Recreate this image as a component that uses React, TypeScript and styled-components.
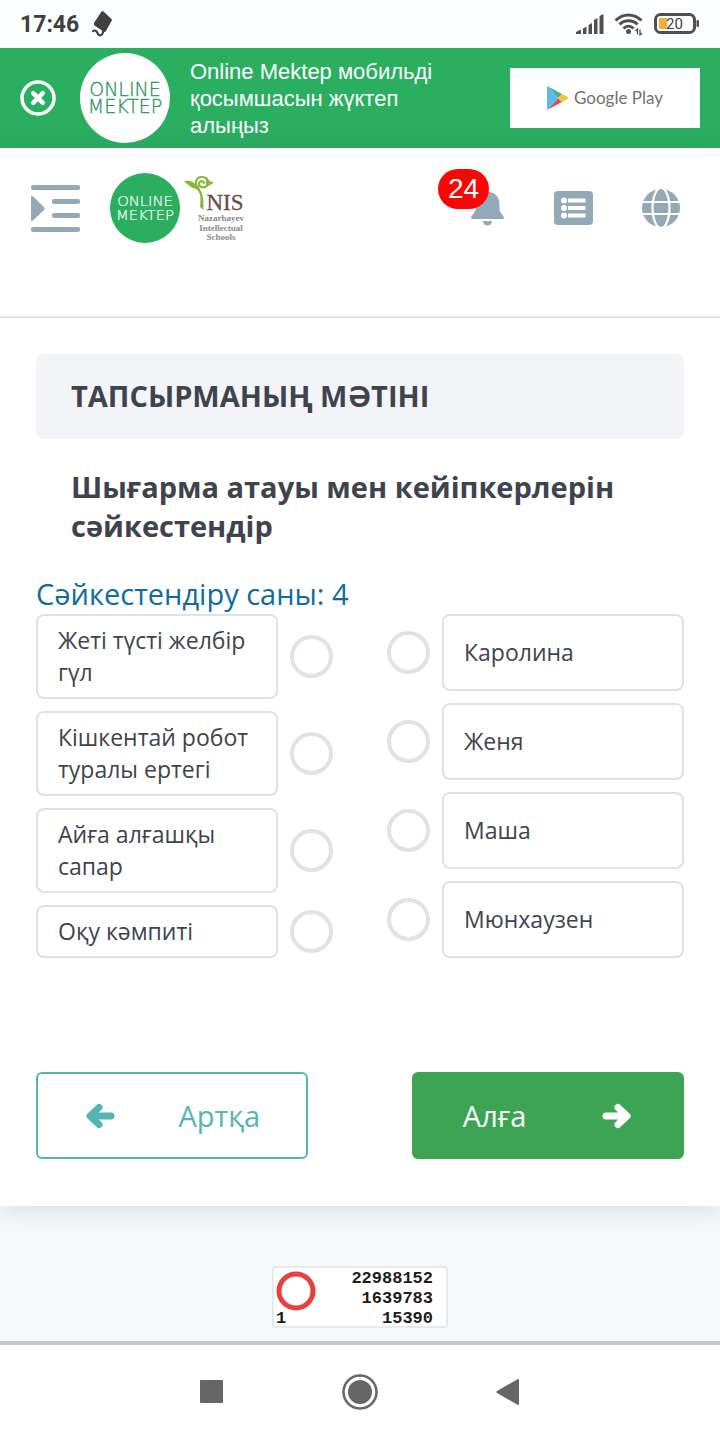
import React from "react";
import styled, { createGlobalStyle } from "styled-components";

const sans = `"Open Sans", "Noto Sans", sans-serif`;
const grotesk = `"Liberation Sans", Arial, sans-serif`;

const GlobalStyle = createGlobalStyle`
  *, *::before, *::after { box-sizing: border-box; }
  body { margin: 0; background: #f5f9fc; color: #3e444e; font-family: ${sans}; }
  h1, h2, p { margin: 0; }
  button { font: inherit; margin: 0; padding: 0; border: 0; background: none; color: inherit; cursor: pointer; }
  svg { display: block; flex: none; overflow: visible; }
`;

const Screen = styled.div`
  display: flex;
  flex-direction: column;
  min-height: 100vh;
`;

const StatusBar = styled.div`
  display: flex;
  align-items: center;
  justify-content: space-between;
  height: 48px;
  padding: 0 20px;
  background: #fdfffe;
  color: #404040;
`;

const StatusGroup = styled.div<{ $gap: number }>`
  display: flex;
  align-items: center;
  gap: ${(p) => p.$gap}px;
`;

const Clock = styled.time`
  padding-top: 2px;
  font: 700 23px/46px Roboto, sans-serif;
`;

const Banner = styled.section`
  display: flex;
  align-items: center;
  height: 100px;
  padding: 0 20px;
  background: #2aae60;
  color: #fff;
`;

const BannerText = styled.p`
  flex: 1;
  padding: 0 60px 0 20px;
  font: 400 22px/27px ${grotesk};
`;

const CloseButton = styled.button`
  margin-right: 24px;
`;

const StoreLink = styled.a`
  display: flex;
  align-items: center;
  justify-content: center;
  gap: 6px;
  width: 190px;
  height: 60px;
  background: #fefefe;
  color: #77706f;
  font: 400 17px/24px Lato, sans-serif;
  text-decoration: none;
`;

const Panel = styled.div`
  background: #fff;
  box-shadow: 0 4px 24px rgba(60, 80, 100, 0.16);
`;

const Header = styled.header`
  display: flex;
  align-items: flex-start;
  height: 170px;
  padding: 24px 36px 0 30px;
  border-bottom: 2px solid #e2e5e8;
  color: #93a9b8;
`;

const HeaderButton = styled.button`
  position: relative;
  display: flex;
  align-items: center;
  height: 72px;
`;

const Brand = styled.a`
  display: flex;
  align-items: center;
  gap: 4px;
  margin-left: 30px;
  text-decoration: none;
`;

const Tools = styled.nav`
  display: flex;
  gap: 46px;
  margin-left: auto;
`;

const Badge = styled.span`
  position: absolute;
  top: -3px;
  left: -32px;
  padding: 0 10px;
  border-radius: 20px;
  background: #fb0505;
  color: #fff;
  font: 400 28px/40px ${grotesk};
`;

const Task = styled.main`
  padding: 36px 36px 47px;
`;

const TaskLabel = styled.h1`
  padding: 0 35px 1px;
  border-radius: 8px;
  background: #f3f4f8;
  font-size: 29px;
  line-height: 84px;
  font-weight: 700;
`;

const Question = styled.h2`
  padding: 28px 35px 29px;
  font-size: 29px;
  line-height: 39px;
  font-weight: 700;
`;

const MatchCount = styled.p`
  color: #0f6ba3;
  font-size: 29px;
  line-height: 40px;
`;

const Matching = styled.div`
  display: grid;
  grid-template-columns: 1fr 1fr;
  gap: 54px;
`;

const Column = styled.div`
  display: flex;
  flex-direction: column;
  gap: 12px;
`;

const Option = styled.div<{ $side: "left" | "right" }>`
  display: flex;
  flex: ${(p) => (p.$side === "right" ? "1" : "none")};
  flex-direction: ${(p) => (p.$side === "right" ? "row-reverse" : "row")};
  align-items: center;
  gap: 12px;
`;

const OptionLabel = styled.label`
  display: flex;
  flex: 1;
  align-items: center;
  align-self: stretch;
  padding: 8px 20px 9px;
  border: 2px solid #dfe1e5;
  border-radius: 8px;
  font-size: 23px;
  line-height: 32px;
`;

const Ring = styled.input`
  flex: none;
  appearance: none;
  width: 43px;
  height: 43px;
  margin: 0;
  border: 4px solid #dfe3e7;
  border-radius: 50%;
  background: #fff;

  &:checked { border-color: #3aa352; }
`;

const Actions = styled.div`
  display: flex;
  justify-content: space-between;
  margin-top: 114px;
`;

const StepButton = styled.button<{ $primary?: boolean }>`
  && {
    display: flex;
    align-items: center;
    justify-content: space-between;
    width: 42%;
    height: 87px;
    padding: 0 ${(p) => (p.$primary ? 50 : 46)}px 0 ${(p) => (p.$primary ? 49 : 47)}px;
    border: 2px solid ${(p) => (p.$primary ? "#3ca452" : "#56b5b2")};
    border-radius: 6px;
    background: ${(p) => (p.$primary ? "#3ca452" : "#fff")};
    color: ${(p) => (p.$primary ? "#fff" : "#56b5b2")};
    font-size: 29px;
    line-height: 40px;
  }
`;

const Footer = styled.footer`
  display: flex;
  flex: 1;
  justify-content: center;
  padding: 60px 0 13px;
`;

const Counter = styled.div`
  display: flex;
  justify-content: space-between;
  width: 176px;
  height: 62px;
  padding: 1px 13px 0 2px;
  border: 2px solid #e6e9eb;
  border-radius: 4px;
  background: #fff;
  color: #1c1c1c;
  font: 700 17px/20px "Liberation Mono", monospace;
`;

const CounterSide = styled.div<{ $end?: boolean }>`
  display: flex;
  flex-direction: column;
  align-items: ${(p) => (p.$end ? "flex-end" : "flex-start")};
`;

const SystemNav = styled.nav`
  display: flex;
  align-items: center;
  justify-content: center;
  height: 99px;
  padding: 0 1px 2px 0;
  border-top: 4px solid #c6c9cb;
  background: #fff;
`;

const NavKey = styled.button`
  display: flex;
  justify-content: center;
  width: 148px;
`;

function MektepLogo({ size, disc, ink }: { size: number; disc: string; ink: string }) {
  return (
    <svg width={size} height={size} viewBox="0 0 90 90" role="img" aria-label="Online Mektep">
      <circle cx="45" cy="45" r="45" fill={disc} />
      <g fill={ink} stroke={ink} strokeWidth="0.3" fontFamily="'DejaVu Sans'" fontWeight="200" fontSize="19" textAnchor="middle">
        <text x="45" y="43">ONLINE</text>
        <text x="45" y="60">MEKTEP</text>
      </g>
    </svg>
  );
}

function NisLogo() {
  return (
    <svg width="64" height="72" viewBox="0 0 64 72" role="img" aria-label="NIS">
      <path d="M0 9C5 8 10 9 13 14C18 18 20 25 19.500 38L16 35C17 27 17 20 12 17C8 16 4 13 0 9Z" fill="#86b83c" />
      <path d="M22 5C25 9 27 10 30 10.500C27 13 24 14 22 14Z" fill="#86b83c" />
      <path d="M14 16C10 11 12 5 18 5C23 5 25 9 24 12C22 17 15 16 15 12C15 9 19 8 20 11" fill="none" stroke="#86b83c" strokeWidth="2.200" strokeLinecap="round" />
      <g fontFamily="'Liberation Serif'" textAnchor="middle">
        <text x="41" y="38" fontSize="23" fill="#6b4e40" stroke="#6b4e40" strokeWidth="0.3">NIS</text>
        <g fontSize="9" fontWeight="700" fill="#8a8885">
          <text x="37" y="49">Nazarbayev</text>
          <text x="37" y="59">Intellectual</text>
          <text x="37" y="68">Schools</text>
        </g>
      </g>
    </svg>
  );
}

function ArrowIcon({ back }: { back?: boolean }) {
  return (
    <svg width="30" height="32" viewBox="0 0 30 32" fill="none" stroke="currentColor" strokeWidth="7" strokeLinecap="round" strokeLinejoin="round">
      {back ? <path d="M26 16H6M14 7.500L5 16L14 24.500" /> : <path d="M4 16H24M16 7.500L25 16L16 24.500" />}
    </svg>
  );
}

const leftItems = ["Жеті түсті желбір гүл", "Кішкентай робот туралы ертегі", "Айға алғашқы сапар", "Оқу кәмпиті"];
const rightItems = ["Каролина", "Женя", "Маша", "Мюнхаузен"];

function OptionColumn({ side, items }: { side: "left" | "right"; items: string[] }) {
  return (
    <Column>
      {items.map((item, i) => (
        <Option key={item} $side={side}>
          <OptionLabel htmlFor={`${side}-${i}`}>{item}</OptionLabel>
          <Ring type="radio" name={side} id={`${side}-${i}`} />
        </Option>
      ))}
    </Column>
  );
}

export default function App() {
  return (
    <Screen>
      <GlobalStyle />
      <StatusBar>
        <StatusGroup $gap={13}>
          <Clock>17:46</Clock>
          <svg width="22" height="28" viewBox="0 0 22 28">
            <path d="M9.500 1.500Q10.500 0.500 11.500 1.500L19.500 9Q20.500 10 19.500 11L14 21Q13 22.500 11.500 21.500L2.500 15.500Q1.500 14.500 2 13Z" fill="#404040" />
            <path d="M11 19C12 26 7 27 5.500 23C4.500 20.500 3 20 1 21" fill="none" stroke="#404040" strokeWidth="2.200" strokeLinecap="round" />
          </svg>
        </StatusGroup>
        <StatusGroup $gap={10}>
          <svg width="28" height="20" viewBox="0 0 28 20" fill="#505050">
            <path d="M0 20V18L5 15.500V20ZM7 14.500L10.500 12.500V20H7ZM12.500 11L16 9V20H12.500ZM18 6L21.500 4V20H18ZM23.500 2L27.500 0V20H23.500Z" />
          </svg>
          <svg width="30" height="24" viewBox="0 0 30 24" fill="none" stroke="#505050" strokeWidth="3">
            <path d="M1.500 8.500C9 1 20 1 27.500 8.500M5.500 12.500C10.500 7.500 18.500 7.500 23.500 12.500M9.500 16.500C12.500 13.500 16.500 13.500 19.500 16.500" />
            <circle cx="14.500" cy="19.500" r="2.500" fill="#505050" stroke="none" />
            <path d="M23.500 22.500V17L21.500 19M26 17.500V23L28 21" strokeWidth="1.300" />
          </svg>
          <svg width="46" height="22" viewBox="0 0 46 22">
            <rect x="1.500" y="1.500" width="39" height="18" rx="5" fill="#fff" stroke="#505050" strokeWidth="3" />
            <rect x="5" y="5" width="8" height="11" rx="1" fill="#f5ae3b" />
            <rect x="42.500" y="7" width="2.500" height="7" rx="1" fill="#505050" />
            <text x="20.500" y="16" fontFamily="Roboto" fontSize="15" textAnchor="middle" fill="#404040">20</text>
          </svg>
        </StatusGroup>
      </StatusBar>

      <Banner>
        <CloseButton type="button" aria-label="Жабу">
          <svg width="36" height="36" viewBox="0 0 36 36" fill="none" stroke="#fff">
            <circle cx="18" cy="18" r="16" strokeWidth="3.500" />
            <path d="M13.200 13.200L22.800 22.800M22.800 13.200L13.200 22.800" strokeWidth="4.500" strokeLinecap="round" />
          </svg>
        </CloseButton>
        <MektepLogo size={90} disc="#fff" ink="#2a9459" />
        <BannerText>Online Mektep мобильді қосымшасын жүктеп алыңыз</BannerText>
        <StoreLink href="#play">
          <svg width="21" height="24" viewBox="0 0 21 24">
            <path d="M0 1Q0 0 1 0.500L11 12L1 23.500Q0 24 0 23Z" fill="#5bbcec" />
            <path d="M1 0.500L15 8L11 12Z" fill="#43b08a" />
            <path d="M1 23.500L15 16L11 12Z" fill="#e04b5d" />
            <path d="M15 8L20.500 11Q21.500 12 20.500 13L15 16L11 12Z" fill="#f3c52f" />
          </svg>
          Google Play
        </StoreLink>
      </Banner>

      <Panel>
        <Header>
          <HeaderButton type="button" aria-label="Мәзір">
            <svg width="50" height="48" viewBox="0 0 50 48" fill="currentColor">
              <rect x="1" y="1" width="49" height="5" rx="2" />
              <rect x="22" y="15" width="28" height="5" rx="2" />
              <rect x="22" y="29" width="28" height="5" rx="2" />
              <rect x="1" y="43" width="49" height="5" rx="2" />
              <path d="M1 13Q1 11 3 12.500L14 23Q15.500 24.500 14 26L3 36.500Q1 38 1 36Z" />
            </svg>
          </HeaderButton>
          <Brand href="#home">
            <MektepLogo size={70} disc="#2aae60" ink="#fff" />
            <NisLogo />
          </Brand>
          <Tools>
            <HeaderButton type="button">
              <svg width="37" height="36" viewBox="0 0 37 36" fill="currentColor" aria-hidden="true">
                <path d="M17.500 2C26 2 29.500 8 29.500 14V19C29.500 23 34 25 34 28Q34 29 32.500 29H2.500Q1 29 1 28C1 25 5.500 23 5.500 19V14C5.500 8 9 2 17.500 2Z" />
                <path d="M13 31H22C22 37 13 37 13 31Z" />
              </svg>
              <Badge>24</Badge>
            </HeaderButton>
            <HeaderButton type="button" aria-label="Тізім">
              <svg width="40" height="34" viewBox="0 0 40 34">
                <rect x="1" width="39" height="34" rx="4" fill="currentColor" />
                <g fill="#fff">
                  <circle cx="11" cy="9.500" r="3" />
                  <circle cx="11" cy="17" r="3" />
                  <circle cx="11" cy="24.500" r="3" />
                  <rect x="15" y="7.500" width="17.500" height="4" />
                  <rect x="15" y="15" width="17.500" height="4" />
                  <rect x="15" y="22.500" width="17.500" height="4" />
                </g>
              </svg>
            </HeaderButton>
            <HeaderButton type="button" aria-label="Тіл">
              <svg width="45" height="38" viewBox="0 0 45 38">
                <circle cx="22" cy="19" r="19" fill="currentColor" />
                <g fill="none" stroke="#fff" strokeWidth="2.200">
                  <ellipse cx="22" cy="19" rx="8.500" ry="20" />
                  <path d="M2 13H42M2 25H42" />
                </g>
              </svg>
            </HeaderButton>
          </Tools>
        </Header>

        <Task>
          <TaskLabel>ТАПСЫРМАНЫҢ МӘТІНІ</TaskLabel>
          <Question>Шығарма атауы мен кейіпкерлерін сәйкестендір</Question>
          <MatchCount>Сәйкестендіру саны: 4</MatchCount>
          <Matching>
            <OptionColumn side="left" items={leftItems} />
            <OptionColumn side="right" items={rightItems} />
          </Matching>
          <Actions>
            <StepButton type="button">
              <ArrowIcon back />
              Артқа
            </StepButton>
            <StepButton type="button" $primary>
              Алға
              <ArrowIcon />
            </StepButton>
          </Actions>
        </Task>
      </Panel>

      <Footer>
        <Counter>
          <CounterSide>
            <svg width="40" height="40" viewBox="0 0 40 40">
              <circle cx="20" cy="22" r="17" fill="none" stroke="#e8403f" strokeWidth="5" />
            </svg>
            <span>1</span>
          </CounterSide>
          <CounterSide $end>
            <span>22988152</span>
            <span>1639783</span>
            <span>15390</span>
          </CounterSide>
        </Counter>
      </Footer>

      <SystemNav>
        <NavKey type="button" aria-label="Recent apps">
          <svg width="24" height="24" viewBox="0 0 24 24"><rect width="23" height="23" rx="1" fill="#666" /></svg>
        </NavKey>
        <NavKey type="button" aria-label="Home">
          <svg width="36" height="36" viewBox="0 0 36 36">
            <circle cx="18" cy="18" r="16.500" fill="none" stroke="#666" strokeWidth="2.500" />
            <circle cx="18" cy="18" r="12" fill="#666" />
          </svg>
        </NavKey>
        <NavKey type="button" aria-label="Back">
          <svg width="24" height="28" viewBox="0 0 24 28"><path d="M1 13Q0 14 1 15L22 27Q23 27.500 23 26V2Q23 0.500 22 1Z" fill="#666" /></svg>
        </NavKey>
      </SystemNav>
    </Screen>
  );
}
